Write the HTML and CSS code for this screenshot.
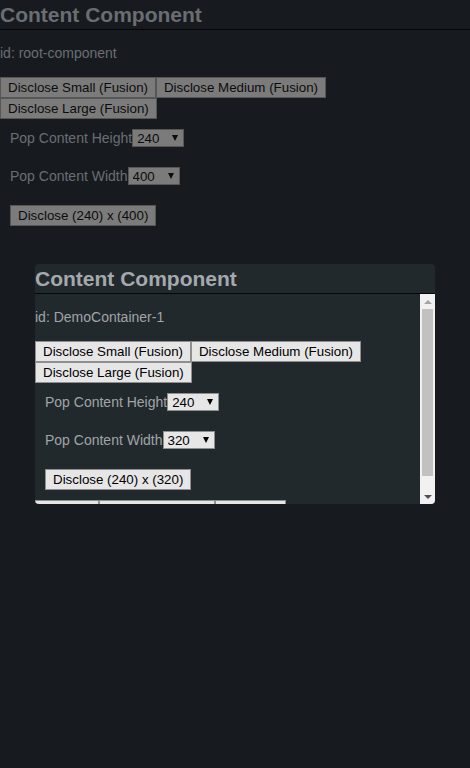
FILE: index.html
```html
<!DOCTYPE html>
<html lang="en">
<head>
<meta charset="utf-8">
<title>Content Component</title>
<link rel="stylesheet" href="styles.css">
</head>
<body>
<div class="component root">
  <h2 class="cc-header">Content Component</h2>
  <div class="cc-body">
    <div class="cc-id">id: root-component</div>
    <div class="btn-row">
      <button class="btn">Disclose Small (Fusion)</button><button class="btn">Disclose Medium (Fusion)</button><button class="btn">Disclose Large (Fusion)</button>
    </div>
    <div class="field-row">
      <label class="field-label">Pop Content Height</label><span class="sel"><select class="sel-input"><option>240</option></select></span>
    </div>
    <div class="field-row">
      <label class="field-label">Pop Content Width</label><span class="sel"><select class="sel-input"><option>400</option></select></span>
    </div>
    <div class="field-row">
      <button class="btn">Disclose (240) x (400)</button>
    </div>
  </div>
</div>

<div class="popup component">
  <h2 class="cc-header">Content Component</h2>
  <div class="popup-body">
    <div class="cc-body scroll">
      <div class="cc-id">id: DemoContainer-1</div>
      <div class="btn-row">
        <button class="btn">Disclose Small (Fusion)</button><button class="btn">Disclose Medium (Fusion)</button><button class="btn">Disclose Large (Fusion)</button>
      </div>
      <div class="field-row">
        <label class="field-label">Pop Content Height</label><span class="sel"><select class="sel-input"><option>240</option></select></span>
      </div>
      <div class="field-row">
        <label class="field-label">Pop Content Width</label><span class="sel"><select class="sel-input"><option>320</option></select></span>
      </div>
      <div class="field-row">
        <button class="btn">Disclose (240) x (320)</button>
      </div>
      <div class="btn-row">
        <button class="btn w-a">Dismiss</button><button class="btn w-b">Dismiss Disclosure</button><button class="btn w-c">Go Back</button>
      </div>
    </div>
    <div class="vscroll" aria-hidden="true">
      <div class="vs-btn"><span class="tri-up"></span></div>
      <div class="vs-track"><div class="vs-thumb"></div></div>
      <div class="vs-btn"><span class="tri-down"></span></div>
    </div>
  </div>
</div>
</body>
</html>
```

FILE: styles.css
```css
html, body {
  margin: 0;
  padding: 0;
  height: 100%;
}
body {
  background: #171b1f;
  font-family: "Liberation Sans", Arial, sans-serif;
  color: #6a6e72;
  font-size: 14px;
}
.component {
  position: relative;
}
.cc-header {
  margin: 0;
  padding: 3px 0 2px;
  font-size: 21px;
  line-height: 24px;
  font-weight: bold;
  border-bottom: 1px solid #050607;
}
.cc-id {
  margin: 15px 0 16px;
  line-height: 16px;
}
.btn-row {
  display: flex;
  flex-wrap: wrap;
}
.btn {
  font-family: "Liberation Sans", Arial, sans-serif;
  font-size: 13.33px;
  line-height: 15px;
  padding: 2px 7px;
  margin: 0;
  border: 1px solid #565656;
  background: #7b7b7b;
  color: #0c0c0c;
  border-radius: 0;
  height: 21px;
  white-space: nowrap;
}
.field-row {
  padding: 10px;
  display: flex;
  align-items: center;
}
.field-label {
  line-height: 18px;
}
.sel {
  position: relative;
  display: inline-block;
}
.sel-input {
  -webkit-appearance: none;
  appearance: none;
  font-family: "Liberation Sans", Arial, sans-serif;
  font-size: 13.33px;
  height: 18px;
  width: 52px;
  padding: 0 0 0 4px;
  margin: 0;
  border: 1px solid #565656;
  border-radius: 0;
  background: #7b7b7b;
  color: #0c0c0c;
  display: block;
}
.sel::after {
  content: "";
  position: absolute;
  right: 6px;
  top: 6px;
  width: 0;
  height: 0;
  border-left: 3.5px solid transparent;
  border-right: 3.5px solid transparent;
  border-top: 6px solid #0c0c0c;
  pointer-events: none;
}

/* popup */
.popup {
  position: absolute;
  left: 35px;
  top: 264px;
  width: 400px;
  height: 240px;
  background: #22292d;
  border-radius: 4px;
  overflow: hidden;
  color: #a0a4a8;
}
.popup .cc-header {
  color: #a5a9ad;
}
.popup-body {
  display: flex;
  height: 210px;
}
.popup .scroll {
  flex: 1;
  min-width: 0;
  overflow: hidden;
}
.vscroll {
  width: 15px;
  flex: none;
  display: flex;
  flex-direction: column;
  background: #f1f1f1;
}
.vs-btn {
  height: 15px;
  flex: none;
  display: flex;
  align-items: center;
  justify-content: center;
}
.tri-up {
  width: 0;
  height: 0;
  border-left: 4px solid transparent;
  border-right: 4px solid transparent;
  border-bottom: 4px solid #a3a3a3;
}
.tri-down {
  width: 0;
  height: 0;
  border-left: 4px solid transparent;
  border-right: 4px solid transparent;
  border-top: 4px solid #505050;
}
.vs-track {
  flex: 1;
  padding: 0 2px;
}
.vs-thumb {
  height: 167px;
  background: #c1c1c1;
}
.popup .btn {
  background: #e6e6e6;
  border-color: #8f8f8f;
  color: #000;
}
.popup .sel-input {
  background: #e6e6e6;
  border-color: #8f8f8f;
  color: #000;
}
.popup .sel::after {
  border-top-color: #000;
}
.w-a { width: 64px; }
.w-b { width: 116px; }
.w-c { width: 71px; }
.btn-row .w-a, .btn-row .w-b, .btn-row .w-c {
  overflow: hidden;
}
```
